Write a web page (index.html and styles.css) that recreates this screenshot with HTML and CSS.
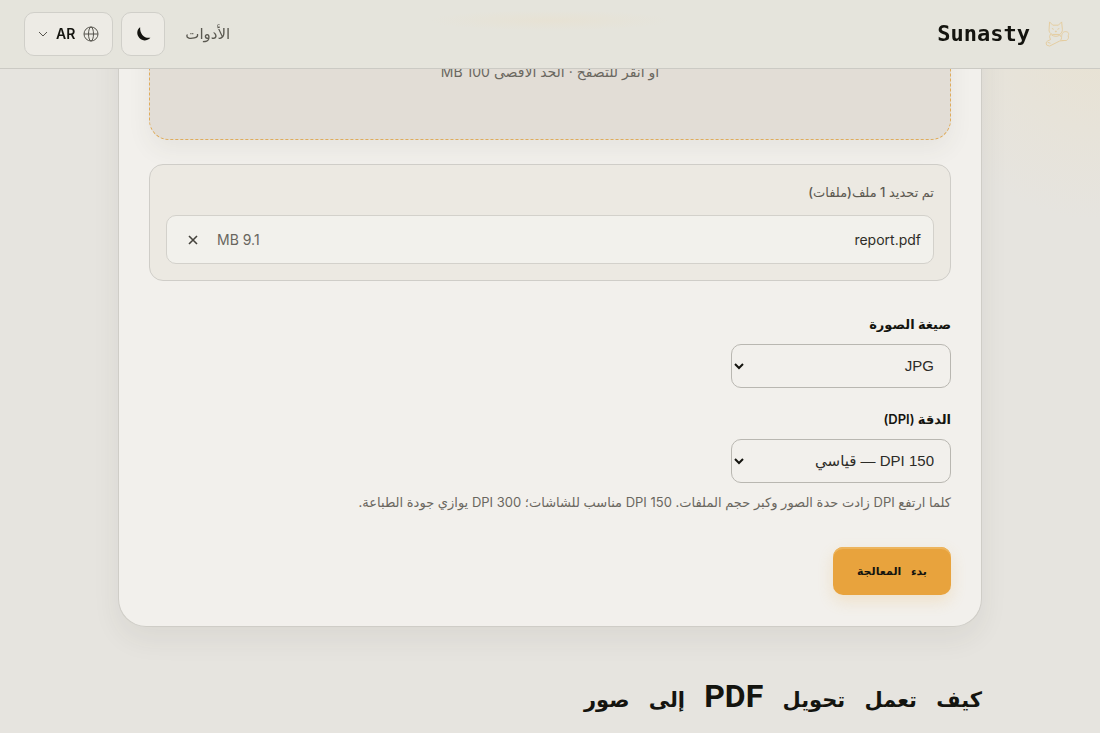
FILE: index.html
```html
<!DOCTYPE html>
<html lang="ar" dir="rtl">
<head>
<meta charset="utf-8">
<meta name="viewport" content="width=device-width, initial-scale=1">
<title>Sunasty</title>
<link rel="stylesheet" href="styles.css">
</head>
<body>
<header class="topbar">
  <a class="brand" href="#">
    <svg class="brand-logo" viewBox="0 0 28 28" aria-hidden="true">
      <path d="M6 1l3.500 3.500h6L19 1l.8 8c.2 2-.8 4-2.800 5.500H9C6.500 13.500 5 11.500 5.500 9zM8.500 8l2 1M16.500 8l-2 1M12 11h1.500l-.8 1zM7 14l-1 3 1 3-3 1.500c-2 1-2 3-1 4.500l3 1 7-3.500 4-2 5-.5M8 15c3 2 7 2 9 0l2 3-1 3M19 17c0-4 2-6 5-5.500 3 .5 3 3 2 4.500 1 2 0 4-2 5h-5M4 23l3 1"/>
    </svg>
    <span>Sunasty</span>
  </a>
  <nav class="actions">
    <a class="nav-link" href="#">الأدوات</a>
    <button class="icon-button" type="button" aria-label="الوضع الداكن">
      <svg class="moon" viewBox="0 0 14 14" aria-hidden="true"><path d="M4.500 1C2 2.500 1.300 6 2.800 9c2 4 7 5 10.700 1.200C8.500 11.200 4 7 4.500 1z"/></svg>
    </button>
    <button class="icon-button language" type="button" aria-label="اللغة">
      <svg class="globe" viewBox="0 0 16 16" aria-hidden="true"><circle cx="8" cy="8" r="7"/><ellipse cx="8" cy="8" rx="2.500" ry="7"/><path d="M1 8h14"/></svg>
      <span>AR</span>
      <svg class="chevron" viewBox="0 0 10 10" aria-hidden="true"><path d="M1 3l4 4 4-4"/></svg>
    </button>
  </nav>
</header>
<main class="page">
  <form class="card">
    <div class="dropzone"><p>أو انقر للتصفح · الحد الأقصى <bdi>100</bdi> MB</p></div>
    <section class="files">
      <h2 class="files-title">تم تحديد 1 ملف(ملفات)</h2>
      <div class="file">
        <span class="file-name">report.pdf</span>
        <span class="file-size">9.1 MB</span>
        <button class="remove" type="button" aria-label="إزالة"><svg viewBox="0 0 10 10" aria-hidden="true"><path d="M1 1l8 8M9 1L1 9"/></svg></button>
      </div>
    </section>
    <div class="field">
      <label for="format">صيغة الصورة</label>
      <div class="select-wrap">
        <select id="format"><option>JPG</option></select>
        <svg viewBox="0 0 10 10" aria-hidden="true"><path d="M1 3l4 4 4-4"/></svg>
      </div>
    </div>
    <div class="field">
      <label for="dpi">الدقة (DPI)</label>
      <div class="select-wrap">
        <select id="dpi"><option>150 DPI — قياسي</option></select>
        <svg viewBox="0 0 10 10" aria-hidden="true"><path d="M1 3l4 4 4-4"/></svg>
      </div>
      <p class="hint">كلما ارتفع DPI زادت حدة الصور وكبر حجم الملفات. <bdi>150</bdi> DPI مناسب للشاشات؛ <bdi>300</bdi> DPI يوازي جودة الطباعة.</p>
    </div>
    <button class="submit" type="button"><span>بدء</span> <span>المعالجة</span></button>
  </form>
  <h2 class="heading"><span>كيف</span> <span>تعمل</span> <span>تحويل</span> <b>PDF</b> <span>إلى</span> <span>صور</span></h2>
</main>
</body>
</html>
```
FILE: styles.css
```css
* { box-sizing: border-box; }
body {
  margin: 0;
  min-height: 100vh;
  overflow: hidden;
  background: radial-gradient(circle at 100% 40px, #e8e2d3 0, #e6e4df 180px);
  background-color: #e6e4df;
  color: #14140f;
  font-family: Inter, "DejaVu Sans", sans-serif;
  font-size: 14px;
  line-height: 24px;
}
button, select { font: inherit; color: inherit; }
p, h2 { margin: 0; }
svg { fill: none; stroke: currentColor; flex: none; }
.topbar {
  position: fixed;
  inset: 0 0 auto;
  z-index: 1;
  display: flex;
  align-items: center;
  justify-content: space-between;
  padding: 12px 24px;
  border-bottom: 1px solid #cbcac4;
  background: radial-gradient(ellipse at 50% 30%, #e7e2d4, #e5e4dc 120px);
}
.brand {
  display: flex;
  align-items: center;
  gap: 14px;
  padding: 0 6px;
  color: inherit;
  font: bold 22px/32px "DejaVu Sans Mono", monospace;
  text-decoration: none;
}
.brand-logo { width: 26px; height: 26px; stroke: #e4cb9d; }
.actions { display: flex; align-items: center; gap: 8px; }
.nav-link { margin-inline-end: 12px; color: #5a5850; font-size: 15px; text-decoration: none; }
.icon-button {
  display: flex;
  align-items: center;
  justify-content: center;
  min-width: 44px;
  height: 44px;
  padding: 0;
  border: 1px solid #d0cfc9;
  border-radius: 10px;
  background: #edebe5;
}
.language { gap: 8px; padding: 0 13px; font-weight: 600; }
.moon { width: 16px; height: 16px; fill: currentColor; stroke: none; }
.globe { width: 16px; height: 16px; stroke: #55534c; }
.chevron { width: 10px; height: 10px; stroke: #55534c; }
.page { max-width: 912px; margin: 0 auto; padding: 0 24px; }
.card {
  padding: 0 30px 31px;
  border: 1px solid #cfcdc7;
  border-top: 0;
  border-radius: 0 0 28px 28px;
  background: #f2f0ec;
  box-shadow: 0 12px 28px #3c3a2812;
}
.dropzone {
  padding: 60px 24px 55px;
  border: 2px dashed #dfac5c;
  border-width: 0 1px 1px;
  border-radius: 0 0 20px 20px;
  background: #e2ddd6;
  box-shadow: 0 10px 24px #3c3a2810;
  color: #6a675f;
  text-align: center;
}
.files {
  margin: 24px 0 32px;
  padding: 16px;
  border: 1px solid #cfcdc8;
  border-radius: 14px;
  background: #ece9e2;
}
.files-title { margin-bottom: 12px; color: #5c5951; font-size: 13px; line-height: 22px; font-weight: 500; }
.file {
  display: flex;
  align-items: center;
  padding: 8px 12px 7px;
  border: 1px solid #d3d1cb;
  border-radius: 10px;
  background: #f2f1ec;
}
.file-name { flex: 1; color: #2e2d28; }
.file-size { color: #69665e; }
.remove {
  display: grid;
  place-items: center;
  width: 28px;
  height: 32px;
  margin-inline-start: 10px;
  padding: 0;
  border: 0;
  background: none;
}
.remove svg { width: 10px; height: 10px; stroke: #45433c; stroke-width: 1.6; }
.field { display: flex; flex-direction: column; align-items: flex-start; margin-bottom: 20px; }
label { margin-bottom: 8px; font-size: 13px; font-weight: 600; line-height: 23px; }
.select-wrap { position: relative; width: 220px; max-width: 100%; }
select {
  display: block;
  width: 100%;
  height: 44px;
  padding: 0 16px;
  appearance: none;
  border: 1px solid #b9b7b1;
  border-radius: 10px;
  background: #f2f0ec;
  color: #2c2b27;
  font: 15px/24px "Liberation Sans", "DejaVu Sans", sans-serif;
}
.select-wrap svg { position: absolute; left: 3px; top: 17px; width: 10px; height: 10px; stroke-width: 2; pointer-events: none; }
.hint { margin-top: 8px; color: #6a675f; font-size: 13px; line-height: 22px; }
.submit {
  display: block;
  height: 48px;
  margin-top: 34px;
  padding: 0 24px;
  border: 0;
  border-radius: 10px;
  background: #e8a33d;
  box-shadow: 0 6px 16px #e8a33d33, inset 0 2px 0 #edb45c;
  font: bold 16px "Liberation Mono", monospace;
}
.submit span { font: bold 11px "DejaVu Sans", sans-serif; }
.heading { margin-top: 48px; font: bold 32px/48px "Liberation Mono", monospace; }
.heading span { font: bold 21px "DejaVu Sans", sans-serif; }
.heading b { font: bold 32px Roboto, sans-serif; }
```
